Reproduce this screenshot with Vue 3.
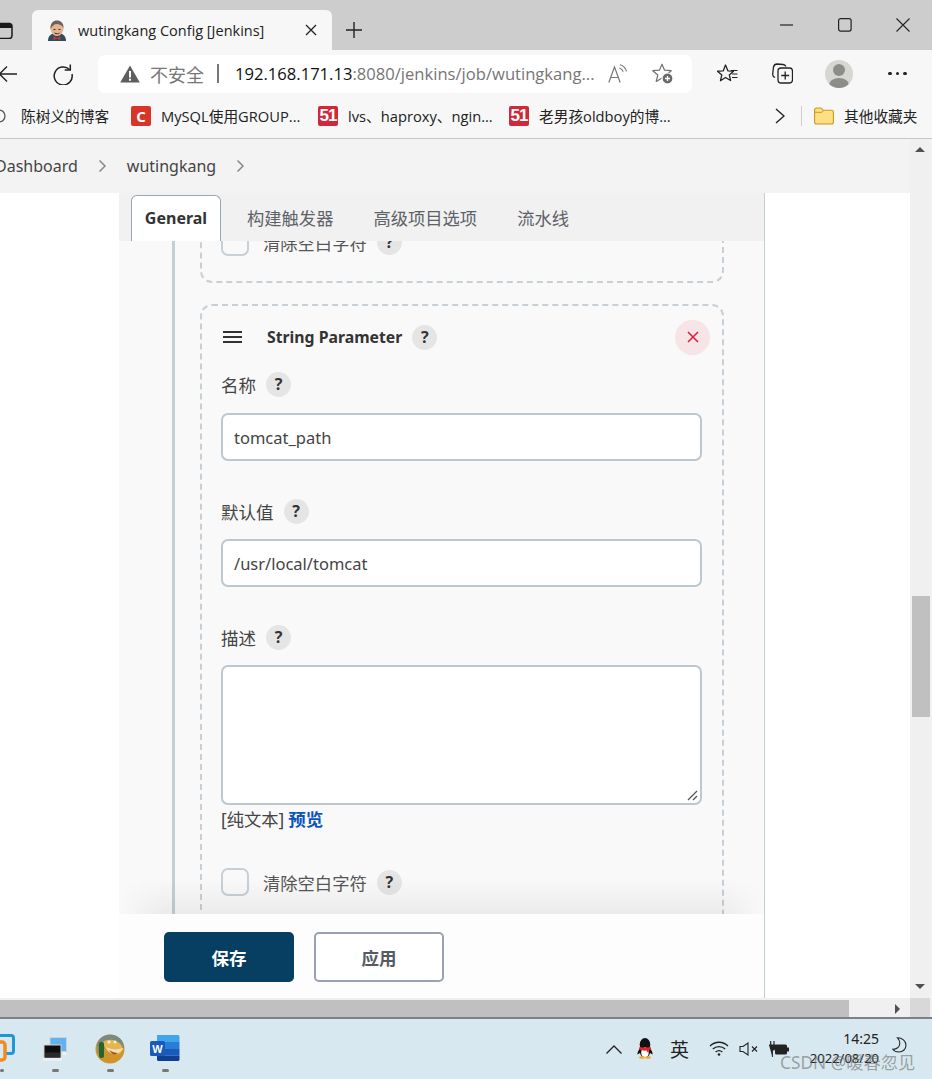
<script setup>
const bookmarks = [
  { text: "MySQL使用GROUP...", icon: "c", width: 187 },
  { text: "lvs、haproxy、ngin...", icon: "51", width: 191 },
  { text: "老男孩oldboy的博...", icon: "51", width: 241 },
];
const tabs = ["构建触发器", "高级项目选项", "流水线"];
</script>

<template>
  <div class="window">
    <header class="titlebar">
      <svg class="win-icon" width="13" height="18" viewBox="0 0 13 18">
        <path d="M-4 2.500h13a3 3 0 0 1 3 3v9a3 3 0 0 1-3 3H-4" fill="none" stroke="#1a1a1a" stroke-width="1.500" />
        <path d="M-4 3h14a2 2 0 0 1 2 2v2H-4z" fill="#1a1a1a" />
      </svg>
      <div class="tab">
        <svg class="favicon" width="20" height="21" viewBox="0 0 20 21">
          <path d="M1 21c0-5 3-7 6-8h6c3 1 6 3 6 8z" fill="#2f4d5e" />
          <ellipse cx="10" cy="8.500" rx="6.500" ry="7.500" fill="#e2b48f" />
          <path d="M3.500 9C3 3 6.500 .5 10 .5S17 3 16.500 8C15 5 12 4 10 4 7 4 5 6 3.500 9z" fill="#6f6259" />
          <path d="M6.500 9.500h2M11.500 9.500h2M7.500 13c2 1 4 1 5 0" stroke="#3d2f28" stroke-width="1" fill="none" />
          <path d="M6.500 16.500l3.500 1.500 3.500-1.500v3.500l-3.500-1.500-3.500 1.500z" fill="#d33833" />
        </svg>
        <span class="tab-title">wutingkang Config [Jenkins]</span>
        <svg class="tab-close" width="12" height="12" viewBox="0 0 12 12">
          <path d="M1 1l10 10M11 1L1 11" stroke="#222" stroke-width="1.300" />
        </svg>
      </div>
      <svg class="new-tab" width="18" height="18" viewBox="0 0 18 18">
        <path d="M9 1v16M1 9h16" stroke="#222" stroke-width="1.400" />
      </svg>
      <div class="win-controls">
        <svg width="14" height="14" viewBox="0 0 14 14"><path d="M0 7h13" stroke="#222" stroke-width="1.200" /></svg>
        <svg width="14" height="14" viewBox="0 0 14 14"><rect x=".6" y=".6" width="12.500" height="12.500" rx="2" fill="none" stroke="#222" stroke-width="1.200" /></svg>
        <svg width="14" height="14" viewBox="0 0 14 14"><path d="M.5.5l13 13M13.500.5l-13 13" stroke="#222" stroke-width="1.100" /></svg>
      </div>
    </header>

    <div class="toolbar">
      <svg class="back" width="19" height="16" viewBox="0 0 19 16">
        <path d="M18 8H0M8 .5L.5 8 8 15.500" fill="none" stroke="#222" stroke-width="1.400" />
      </svg>
      <svg class="reload" width="22" height="22" viewBox="0 0 22 22">
        <path d="M17.500 6.500A9 9 0 1 0 20 11" fill="none" stroke="#222" stroke-width="1.500" />
        <path d="M18.300 1.500v5.600h-5.600" fill="none" stroke="#222" stroke-width="1.500" />
      </svg>
      <div class="address">
        <svg width="20" height="18" viewBox="0 0 20 18">
          <path d="M10 .5L19.800 17.500H.2z" fill="#5f5f5f" />
          <rect x="9" y="6" width="2" height="6.500" fill="#fff" />
          <rect x="9" y="13.700" width="2" height="2" fill="#fff" />
        </svg>
        <span class="insecure">不安全</span>
        <span class="addr-sep"></span>
        <span class="url"><span class="url-host">192.168.171.13</span>:8080/jenkins/job/wutingkang...</span>
        <svg class="read" width="20" height="19" viewBox="0 0 20 19">
          <path d="M.8 18.500L6.500 3l5.700 15.500M2.800 13.500h7.400" fill="none" stroke="#777" stroke-width="1.200" />
          <path d="M12 .8c3 .8 5.500 3 6.500 6.500M11.500 4c2 .6 3 1.800 3.700 3.700" fill="none" stroke="#777" stroke-width="1.100" />
        </svg>
        <svg class="fav-add" width="22" height="22" viewBox="0 0 22 22">
          <path d="M10 1.200l2.600 6 6.600.5-5 4.300 1.600 6.400-5.800-3.400-5.800 3.400 1.600-6.400-5-4.300 6.600-.5z" fill="none" stroke="#707070" stroke-width="1.200" stroke-linejoin="round" />
          <circle cx="15.500" cy="15.500" r="5.500" fill="#6a6a6a" stroke="#fff" stroke-width="1.200" />
          <path d="M15.500 13v5M13 15.500h5" stroke="#fff" stroke-width="1.300" />
        </svg>
      </div>
      <svg class="tool-fav" width="21" height="20" viewBox="0 0 21 20">
        <path d="M8.500 1l2.400 5.800 5.600.4-4.200 3.700 1.300 5.600-5.100-3-5 3.200 1.300-5.800L.5 7.200l5.800-.4z" fill="none" stroke="#222" stroke-width="1.300" stroke-linejoin="round" />
        <path d="M14 6.500h6.500M15 10h5.500M15 13.500h5.500" stroke="#222" stroke-width="1.200" />
      </svg>
      <svg class="tool-coll" width="21" height="21" viewBox="0 0 21 21">
        <path d="M3 14.500c-2-1-2.500-2-2.300-3.500L1.500 4C2 2 3 1 5 1l6 .5c1.500.2 2.500 1 3 2" fill="none" stroke="#222" stroke-width="1.300" />
        <rect x="6" y="5" width="14.500" height="15" rx="3" fill="none" stroke="#222" stroke-width="1.300" />
        <path d="M13.200 8.500v8M9.200 12.500h8" stroke="#222" stroke-width="1.300" />
      </svg>
      <div class="profile">
        <span class="profile-head"></span>
        <span class="profile-body"></span>
      </div>
      <div class="more"><i></i><i></i><i></i></div>
    </div>

    <nav class="bookmarks">
      <svg class="first-icon" width="6" height="16" viewBox="0 0 6 16">
        <circle cx="-1" cy="8" r="6" fill="none" stroke="#555" stroke-width="1.300" />
      </svg>
      <span class="bm-first bm-text">陈树义的博客</span>
      <div v-for="b in bookmarks" :key="b.text" class="bm" :style="{ width: b.width + 'px' }">
        <span v-if="b.icon === 'c'" class="bm-icon bm-c">C</span>
        <span v-else class="bm-icon bm-51">51</span>
        <span class="bm-text">{{ b.text }}</span>
      </div>
      <svg class="bm-more" width="10" height="16" viewBox="0 0 10 16">
        <path d="M1 1l8 7-8 7" fill="none" stroke="#222" stroke-width="1.400" />
      </svg>
      <span class="bm-sep"></span>
      <svg class="folder" width="20" height="18" viewBox="0 0 20 18">
        <path d="M.6 3a2 2 0 0 1 2-2h4.500l2 2.300h8.300a2 2 0 0 1 2 2V15a2 2 0 0 1-2 2H2.600a2 2 0 0 1-2-2z" fill="#fedf83" stroke="#c89a1c" stroke-width="1.100" />
        <path d="M1 5.300h7l2-2" fill="none" stroke="#c89a1c" stroke-width="1" />
      </svg>
      <span class="bm-folder-text bm-text">其他收藏夹</span>
    </nav>

    <div class="viewport">
      <div class="page">
        <div class="crumbs">
          <span class="crumb-first">Dashboard</span>
          <svg width="9" height="14" viewBox="0 0 9 14"><path d="M1.500 1.500L7 7l-5.500 5.500" fill="none" stroke="#888" stroke-width="1.500" /></svg>
          <span>wutingkang</span>
          <svg width="9" height="14" viewBox="0 0 9 14"><path d="M1.500 1.500L7 7l-5.500 5.500" fill="none" stroke="#888" stroke-width="1.500" /></svg>
        </div>
        <div class="columns">
          <div class="side"></div>
          <main class="center">
            <div class="tabbar">
              <span class="cfg-tab active">General</span>
              <span v-for="t in tabs" :key="t" class="cfg-tab">{{ t }}</span>
            </div>
            <div class="scroll-area">
              <div class="rail">
                <section class="card card-prev">
                  <div class="check-row">
                    <span class="checkbox"></span>
                    <span class="check-label">清除空白字符</span>
                    <span class="help">?</span>
                  </div>
                </section>
                <section class="card">
                  <div class="card-head">
                    <span class="handle"><i></i><i></i><i></i></span>
                    <strong>String Parameter</strong>
                    <span class="help">?</span>
                    <span class="remove">
                      <svg width="12" height="12" viewBox="0 0 12 12"><path d="M1 1l10 10M11 1L1 11" stroke="#e6173c" stroke-width="1.500" /></svg>
                    </span>
                  </div>
                  <div class="field-label first"><span>名称</span><span class="help">?</span></div>
                  <div class="input">tomcat_path</div>
                  <div class="field-label"><span>默认值</span><span class="help">?</span></div>
                  <div class="input">/usr/local/tomcat</div>
                  <div class="field-label"><span>描述</span><span class="help">?</span></div>
                  <div class="textarea">
                    <svg class="grip" width="11" height="11" viewBox="0 0 11 11">
                      <path d="M1 10L10 1M6 10l4-4" stroke="#555" stroke-width="1.300" />
                    </svg>
                  </div>
                  <div class="format"><span>[纯文本]</span><a class="preview">预览</a></div>
                  <div class="check-row last">
                    <span class="checkbox"></span>
                    <span class="check-label">清除空白字符</span>
                    <span class="help">?</span>
                  </div>
                </section>
              </div>
            </div>
            <footer class="actions">
              <button class="btn btn-save">保存</button>
              <button class="btn btn-apply">应用</button>
            </footer>
          </main>
          <div class="side side-right"></div>
        </div>
      </div>
      <div class="vscroll">
        <span class="arrow-up"></span>
        <span class="vthumb"></span>
        <span class="arrow-down"></span>
      </div>
    </div>

    <div class="hscroll">
      <span class="hthumb"></span>
      <span class="arrow-right"></span>
      <span class="corner"></span>
    </div>

    <footer class="taskbar">
      <div class="task-item task-first">
        <svg width="15" height="28" viewBox="0 0 15 28">
          <path d="M-8 1.500h19a2.500 2.500 0 0 1 2.500 2.500v13a2.500 2.500 0 0 1-2.500 2.500H4" fill="none" stroke="#1e97d8" stroke-width="3" />
          <rect x="-10" y="8" width="15" height="18" rx="3" fill="none" stroke="#f28a1c" stroke-width="3.500" />
        </svg>
        <i></i>
      </div>
      <div class="task-item task-net">
        <svg width="24" height="26" viewBox="0 0 24 26">
          <rect x="7" y="0.500" width="16.500" height="14" fill="#62b2f0" stroke="#c9d3da" />
          <rect x="20" y="15" width="3" height="3" fill="#eef2f5" />
          <rect x="1" y="8" width="17" height="13" fill="#0e0e0e" stroke="#cfcfcf" />
          <path d="M2 15.500h15v5H2z" fill="#2a2a2a" />
          <rect x="0" y="21" width="19" height="3" rx="1" fill="#eceff1" />
        </svg>
        <i></i>
      </div>
      <div class="task-item task-duck">
        <svg width="30" height="30" viewBox="0 0 30 30">
          <circle cx="15" cy="15" r="14.500" fill="#cf942a" />
          <path d="M2 10C5 2 12 0 18 1c6 1 11 6 11 13H14C9 13 6 18 3 20z" fill="#7a8a80" />
          <path d="M8 8c5-4 14-3 19 4 2 6-3 10-9 8-5-1-9-6-10-12z" fill="#e6b64c" />
          <path d="M11 13c5 3 12 3 17 1-1 4-7 7-11 5-3-1-5-3-6-6z" fill="#f1dfb8" />
          <path d="M14 16c3 2 6 3 9 3l-3 1.500c-2 0-4-2-6-4.500z" fill="#a5432c" />
          <rect x="4" y="8" width="5" height="16" rx="2" fill="#25652a" />
          <circle cx="14" cy="8" r="1.500" fill="#f5f0d8" />
          <circle cx="20" cy="8" r="1.500" fill="#f5f0d8" />
        </svg>
        <i></i>
      </div>
      <div class="task-item task-word">
        <svg width="30" height="28" viewBox="0 0 30 28">
          <path d="M7 1h21a1.500 1.500 0 0 1 1.500 1.500V8H7z" fill="#41a5ee" />
          <rect x="7" y="8" width="22.500" height="7" fill="#2b7cd3" />
          <rect x="7" y="15" width="22.500" height="6.500" fill="#185abd" />
          <path d="M7 21.500h22.500v4A1.500 1.500 0 0 1 28 27H8.500A1.500 1.500 0 0 1 7 25.500z" fill="#103f91" />
          <rect x="0" y="7" width="15" height="15" rx="1.500" fill="#185abd" />
          <text x="7.500" y="18.500" class="word-w">W</text>
        </svg>
        <i></i>
      </div>
      <div class="tray">
        <svg class="t-chev" width="16" height="9" viewBox="0 0 16 9"><path d="M.5 8.500L8 1l7.500 7.500" fill="none" stroke="#222" stroke-width="1.300" /></svg>
        <svg class="t-qq" width="16" height="21" viewBox="0 0 16 21">
          <ellipse cx="8" cy="6.500" rx="5.300" ry="6.500" fill="#111" />
          <path d="M3 10c-1.500 2-3 5-2.500 6.500L3 15c.5 2 1.500 3.500 3 4h4c1.500-.5 2.500-2 3-4l2.500 1.500c.5-1.500-1-4.500-2.500-6.500z" fill="#111" />
          <ellipse cx="8" cy="14.500" rx="3.800" ry="5" fill="#fff" />
          <path d="M2.500 8.800c3 1.200 8 1.200 11 0l.8 2.500-2.800 1.100v2.800l-2.300-2.600c-3 .2-5.200-.3-7.200-1.300z" fill="#e02a2a" />
          <ellipse cx="5" cy="19.500" rx="3" ry="1.300" fill="#f5a623" />
          <ellipse cx="11" cy="19.500" rx="3" ry="1.300" fill="#f5a623" />
        </svg>
        <span class="t-ime">英</span>
        <svg class="t-wifi" width="20" height="15" viewBox="0 0 20 15">
          <path d="M1 5c5-5 13-5 18 0M3.800 8c3.500-3.300 9-3.300 12.400 0M6.600 11c2-1.700 4.800-1.700 6.800 0" fill="none" stroke="#222" stroke-width="1.300" />
          <circle cx="10" cy="13.500" r="1.300" fill="#222" />
        </svg>
        <svg class="t-mute" width="20" height="14" viewBox="0 0 20 14">
          <path d="M1 4.500h3L9 1v12L4 9.500H1z" fill="none" stroke="#222" stroke-width="1.100" />
          <path d="M13 4.500l5 5M18 4.500l-5 5" stroke="#222" stroke-width="1.100" />
        </svg>
        <svg class="t-power" width="20" height="16" viewBox="0 0 20 16">
          <rect x="6" y="3.500" width="12" height="10" rx="1.500" fill="#222" />
          <rect x="18" y="6.500" width="2" height="4" fill="#222" />
          <path d="M1.700 0v4M5 0v4" stroke="#222" stroke-width="1.200" />
          <path d="M0 4h6.800v2.500c0 1.500-1 2.500-2.400 2.500H3.400v7" fill="#222" stroke="#222" stroke-width="1" />
        </svg>
        <div class="clock"><span>14:25</span><span class="date">2022/08/20</span></div>
        <svg class="t-moon" width="15" height="16" viewBox="0 0 15 16">
          <path d="M5.500 .8c4.500 0 8.500 3 8.500 7.200 0 4-3 7-7 7-2.500 0-5-1-6.200-2.800 3.500.2 7-2.200 7-6 0-2-1-4-2.300-5.400z" fill="none" stroke="#222" stroke-width="1.100" />
        </svg>
      </div>
      <span class="watermark">CSDN @暖春忽见</span>
    </footer>
  </div>
</template>

<style>
html,
body {
  margin: 0;
  overflow: hidden;
}
</style>

<style scoped>
.window {
  position: relative;
  width: 932px;
  height: 1079px;
  display: flex;
  flex-direction: column;
  overflow: hidden;
  font-family: "Noto Sans", "Noto Sans CJK SC", sans-serif;
  color: #333;
  background: #f7f7f7;
}

.titlebar {
  height: 50px;
  flex: none;
  display: flex;
  align-items: flex-end;
  background: #cdcdcd;
}

.win-icon {
  margin: 0 19px 11px 0;
  flex: none;
}

.tab {
  width: 300px;
  height: 40px;
  box-sizing: border-box;
  padding: 0 15px;
  display: flex;
  align-items: center;
  background: #f7f7f7;
  border-radius: 6px 6px 0 0;
}

.tab-title {
  margin-left: 11px;
  font-family: "Open Sans", "Noto Sans CJK SC", sans-serif;
  font-size: 14.500px;
  color: #222;
  white-space: nowrap;
}

.tab-close {
  margin-left: auto;
}

.new-tab {
  margin: 0 0 11px 13px;
}

.win-controls {
  margin: 0 22px 0 auto;
  align-self: flex-start;
  padding-top: 18px;
  display: flex;
  gap: 44px;
}

.toolbar {
  height: 47px;
  flex: none;
  display: flex;
  align-items: center;
  background: #f7f7f7;
}

.back {
  margin-left: -1px;
  flex: none;
}

.reload {
  margin-left: 34px;
  flex: none;
}

.address {
  width: 594px;
  height: 38px;
  margin-left: 24px;
  box-sizing: border-box;
  padding: 0 18px 0 22px;
  display: flex;
  align-items: center;
  background: #fff;
  border-radius: 7px;
  font-family: "Open Sans", "Noto Sans CJK SC", sans-serif;
  color: #767676;
  flex: none;
}

.insecure {
  margin-left: 10px;
  font-size: 18px;
}

.addr-sep {
  width: 2px;
  height: 19px;
  margin: 0 16px 0 13px;
  background: #777;
}

.url {
  font-size: 16.600px;
  white-space: nowrap;
}

.url-host {
  color: #111;
}

.read {
  margin-left: auto;
  flex: none;
}

.fav-add {
  margin-left: 24px;
  flex: none;
}

.tool-fav {
  margin-left: 25px;
  flex: none;
}

.tool-coll {
  margin-left: 34px;
  flex: none;
}

.profile {
  position: relative;
  width: 28px;
  height: 28px;
  margin-left: 32px;
  border-radius: 50%;
  background: #d6d6d3;
  overflow: hidden;
  flex: none;
}

.profile-head {
  position: absolute;
  left: 8px;
  top: 4px;
  width: 12px;
  height: 12px;
  border-radius: 50%;
  background: #8c8c88;
}

.profile-body {
  position: absolute;
  left: 4px;
  top: 18px;
  width: 20px;
  height: 14px;
  border-radius: 50%;
  background: #8c8c88;
}

.more {
  margin-left: 35px;
  display: flex;
  gap: 4px;
}

.more i {
  width: 3.500px;
  height: 3.500px;
  border-radius: 50%;
  background: #222;
}

.bookmarks {
  height: 38px;
  padding-bottom: 3px;
  flex: none;
  box-sizing: content-box;
  display: flex;
  align-items: center;
  border-bottom: 1px solid #c6c6c6;
  font-family: "Open Sans", "Noto Sans CJK SC", sans-serif;
  font-size: 14.700px;
  color: #222;
  white-space: nowrap;
}

.bm-text {
  padding-bottom: 2px;
}

.first-icon {
  flex: none;
}

.bm-first {
  width: 110px;
  margin-left: 15px;
  flex: none;
}

.bm {
  display: flex;
  align-items: center;
  gap: 10px;
  flex: none;
}

.bm-icon {
  width: 20px;
  height: 20px;
  display: flex;
  align-items: center;
  justify-content: center;
  border-radius: 2px;
  color: #fff;
  font-weight: 700;
  flex: none;
}

.bm-c {
  background: #d8342a;
  font-size: 15px;
}

.bm-51 {
  background: #d0283a;
  font-family: "Liberation Sans", sans-serif;
  font-size: 17px;
  letter-spacing: -1px;
}

.bm-more {
  margin-left: 25px;
  flex: none;
}

.bm-sep {
  width: 1px;
  height: 20px;
  margin-left: 16px;
  background: #ccc;
}

.folder {
  margin-left: 12px;
  flex: none;
}

.bm-folder-text {
  margin-left: 10px;
}

.viewport {
  height: 859px;
  flex: none;
  display: flex;
  background: #f3f3f3;
}

.page {
  width: 910px;
  flex: none;
  display: flex;
  flex-direction: column;
}

.crumbs {
  height: 54px;
  flex: none;
  display: flex;
  align-items: center;
  font-size: 16px;
  color: #444;
}

.crumb-first {
  margin-left: -5px;
}

.crumbs svg {
  margin: 0 20px;
}

.columns {
  flex: 1;
  min-height: 0;
  display: flex;
  background: #fff;
}

.side {
  width: 119px;
  flex: none;
}

.side-right {
  width: 145px;
}

.center {
  position: relative;
  width: 645px;
  flex: none;
  display: flex;
  flex-direction: column;
  border-right: 1px solid #c3ccd3;
  background: #f9f9f9;
  box-sizing: content-box;
  font-size: 17.300px;
}

.tabbar {
  height: 48px;
  flex: none;
  box-sizing: border-box;
  padding: 2px 0 0 12px;
  display: flex;
  background: #f1f1f1;
}

.cfg-tab {
  height: 46px;
  box-sizing: border-box;
  padding: 0 20px 2px;
  display: flex;
  align-items: center;
  color: #5d6269;
  white-space: nowrap;
}

.cfg-tab.active {
  width: 90px;
  padding: 0 0 2px;
  margin-right: 6px;
  justify-content: center;
  font-size: 16px;
  font-weight: 700;
  color: #333;
  background: #fff;
  border: 1px solid #9aa7b3;
  border-bottom: none;
  border-radius: 6px 6px 0 0;
}

.scroll-area {
  position: relative;
  flex: 1;
  min-height: 0;
  overflow: hidden;
}

/* shadow the sticky footer casts on the form */
.scroll-area::after {
  content: "";
  position: absolute;
  left: 0;
  right: 0;
  bottom: 0;
  height: 36px;
  background: linear-gradient(to bottom, rgba(0, 0, 0, 0), rgba(0, 0, 0, 0.055));
  -webkit-mask-image: linear-gradient(to right, transparent, #000 45px, #000 calc(100% - 45px), transparent);
  mask-image: linear-gradient(to right, transparent, #000 45px, #000 calc(100% - 45px), transparent);
}

.rail {
  margin: -13px 0 0 53px;
  padding-left: 25px;
  border-left: 3px solid #c3ced5;
  width: 524px;
  box-sizing: content-box;
}

.card {
  box-sizing: border-box;
  width: 524px;
  margin-top: 21px;
  padding: 0 20px 40px 19px;
  border: 2px dashed #c7d0d6;
  border-radius: 12px;
}

.card-prev {
  margin-top: 0;
  padding-bottom: 25px;
  border-top: none;
  border-radius: 0 0 12px 12px;
}

.card-prev .check-row {
  height: 28px;
  margin-top: 0;
}

.card-head {
  height: 36px;
  margin-top: 13px;
  display: flex;
  align-items: center;
}

.handle {
  width: 19px;
  margin-left: 2px;
  display: flex;
  flex-direction: column;
  gap: 3px;
}

.handle i {
  height: 2px;
  background: #333;
}

.card-head strong {
  margin: 0 10px 0 25px;
  font-size: 15.800px;
  font-weight: 700;
  color: #333;
  white-space: nowrap;
}

.remove {
  margin-left: auto;
  margin-right: -8px;
  width: 35px;
  height: 35px;
  display: flex;
  align-items: center;
  justify-content: center;
  border-radius: 50%;
  background: #f6e4e7;
}

.help {
  width: 25px;
  height: 25px;
  flex: none;
  display: flex;
  align-items: center;
  justify-content: center;
  border-radius: 50%;
  background: #e5e5e5;
  font-size: 16px;
  font-weight: 700;
  color: #333;
}

.field-label {
  height: 26px;
  margin-top: 37px;
  display: flex;
  align-items: center;
  gap: 10px;
  font-size: 17.500px;
  color: #444;
  white-space: nowrap;
}

.field-label.first {
  margin-top: 16px;
}

.field-label .help {
  font-size: 16px;
}

.input {
  height: 48px;
  margin-top: 15px;
  box-sizing: border-box;
  padding: 0 11px;
  display: flex;
  align-items: center;
  border: 2px solid #bcc8cf;
  border-radius: 7px;
  background: #fff;
  font-size: 16.500px;
  color: #444;
}

.field-label.first + .input {
  margin-top: 16px;
}

.textarea {
  position: relative;
  height: 140px;
  margin-top: 15px;
  box-sizing: border-box;
  border: 2px solid #bcc8cf;
  border-radius: 7px;
  background: #fff;
}

.grip {
  position: absolute;
  right: 2px;
  bottom: 2px;
}

.format {
  height: 26px;
  display: flex;
  align-items: center;
  gap: 4px;
  color: #444;
  white-space: nowrap;
}

.preview {
  font-size: 17.500px;
  font-weight: 700;
  color: #0b54b8;
}

.check-row {
  height: 32px;
  margin-top: 35px;
  display: flex;
  align-items: center;
}

.checkbox {
  width: 28px;
  height: 28px;
  box-sizing: border-box;
  flex: none;
  border: 2.500px solid #c6d0d6;
  border-radius: 7px;
  background: #f9f9f9;
}

.check-label {
  margin: 0 10px 0 14px;
  color: #555;
  white-space: nowrap;
}

.actions {
  height: 84px;
  flex: none;
  box-sizing: border-box;
  padding: 18px 0 0 45px;
  display: flex;
  align-items: flex-start;
  gap: 20px;
  background: #fdfdfd;
}

.btn {
  width: 130px;
  height: 50px;
  box-sizing: border-box;
  border-radius: 5px;
  font-family: inherit;
  font-size: 17.500px;
  font-weight: 700;
  cursor: pointer;
}

.btn-save {
  border: none;
  background: #063f62;
  color: #fff;
}

.btn-apply {
  border: 2px solid #98a3ad;
  background: #fff;
  color: #555b63;
}

.vscroll {
  width: 20px;
  flex: none;
  display: flex;
  flex-direction: column;
  align-items: center;
  background: #f0f0f0;
}

.arrow-up {
  margin-top: 8px;
  border: 5px solid transparent;
  border-top: 0;
  border-bottom: 5px solid #505050;
}

.vthumb {
  width: 18px;
  height: 121px;
  margin: 444px 0 0 2px;
  background: #c0c0c0;
}

.arrow-down {
  margin-top: auto;
  margin-bottom: 9px;
  border: 5px solid transparent;
  border-bottom: 0;
  border-top: 5px solid #505050;
}

.hscroll {
  height: 21px;
  flex: none;
  box-sizing: border-box;
  padding-top: 2px;
  display: flex;
  align-items: stretch;
  background: #f0f0f0;
  border-bottom: 2px solid #808080;
}

.hthumb {
  width: 849px;
  background: #c0c0c0;
}

.arrow-right {
  align-self: center;
  margin-left: 46px;
  border: 5px solid transparent;
  border-right: 0;
  border-left: 5px solid #505050;
}

.corner {
  width: 20px;
  margin: -2px 0 0 10px;
  background: #d8d8d8;
}

.taskbar {
  position: relative;
  flex: 1;
  display: flex;
  background: #d8e8f0;
}

.task-item {
  height: 59px;
  display: flex;
  flex-direction: column;
  align-items: center;
  flex: none;
  box-sizing: border-box;
}

.task-item i {
  margin-top: auto;
  margin-bottom: 6px;
  width: 7px;
  height: 3px;
  border-radius: 2px;
  background: #777;
}

.task-first {
  width: 15px;
  padding-top: 15px;
}

.task-first i {
  align-self: flex-start;
  width: 4px;
}

.task-net {
  width: 24px;
  margin-left: 28px;
  padding-top: 18px;
}

.task-duck {
  width: 30px;
  margin-left: 28px;
  padding-top: 15px;
}

.task-word {
  width: 30px;
  margin-left: 25px;
  padding-top: 15px;
}

.word-w {
  fill: #fff;
  font-family: "Liberation Sans", sans-serif;
  font-size: 11px;
  font-weight: 700;
  text-anchor: middle;
}

.tray {
  position: relative;
  margin-left: auto;
  width: 327px;
  height: 59px;
  display: flex;
  align-items: center;
  color: #222;
}

.t-chev {
  margin-left: 1px;
  margin-top: 1px;
}

.t-qq {
  margin-left: 15px;
  flex: none;
}

.t-ime {
  margin-left: 17px;
  font-size: 19px;
}

.t-wifi {
  margin-left: 20px;
  flex: none;
}

.t-mute {
  margin-left: 10px;
  flex: none;
}

.t-power {
  margin-left: 10px;
  flex: none;
}

.clock {
  width: 90px;
  display: flex;
  flex-direction: column;
  align-items: flex-end;
  gap: 1px;
  font-size: 14px;
  line-height: 19px;
  flex: none;
}

.date {
  font-size: 13px;
}

.t-moon {
  margin: -8px 0 0 13px;
  flex: none;
}

.watermark {
  position: absolute;
  left: 780px;
  top: 30px;
  font-size: 17.300px;
  color: rgba(110, 110, 110, 0.6);
  white-space: nowrap;
}
</style>
